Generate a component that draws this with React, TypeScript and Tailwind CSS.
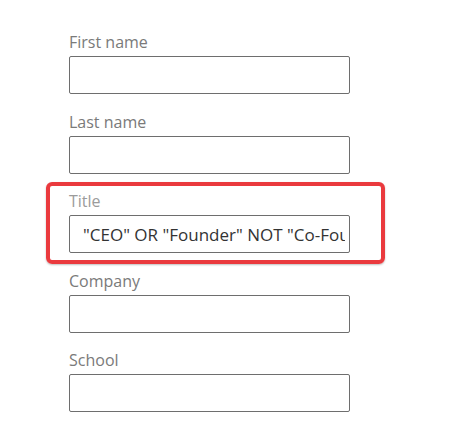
import React from 'react';

const font = { fontFamily: '"Open Sans", "Noto Sans", sans-serif' };

function Field({ label, value, muted }: { label: string; value?: string; muted?: boolean }) {
  return (
    <div className="w-[281px]">
      <div className={`h-[22px] text-[16px] leading-[22px] mb-[3px] ${muted ? 'text-[#9b9b9b]' : 'text-[#7a7a7a]'}`}>
        {label}
      </div>
      <input
        type="text"
        readOnly
        defaultValue={value ?? ''}
        className="block w-[281px] h-[38px] pl-[13px] pr-[4px] rounded-[2px] border border-[#6e6e6e] bg-white text-[17px] text-[#333333] outline-none"
        style={font}
      />
    </div>
  );
}

export default function App() {
  return (
    <div className="w-[457px] h-[446px] bg-white" style={font}>
      <div className="pt-[31px] pl-[69px]">
        <Field label="First name" />
        <div className="mt-[17px]">
          <Field label="Last name" />
        </div>
        <div className="-ml-[23px] mt-[8px] w-[339px] rounded-[6px] border-4 border-[#ea3a3e] pl-[19px] pt-[4px] pb-[7px] shadow-[0_1px_2px_rgba(0,0,0,0.25)]">
          <Field label="Title" value={'"CEO" OR "Founder" NOT "Co-Founder"'} muted />
        </div>
        <div className="mt-[6px]">
          <Field label="Company" />
        </div>
        <div className="mt-[16px]">
          <Field label="School" />
        </div>
      </div>
    </div>
  );
}
